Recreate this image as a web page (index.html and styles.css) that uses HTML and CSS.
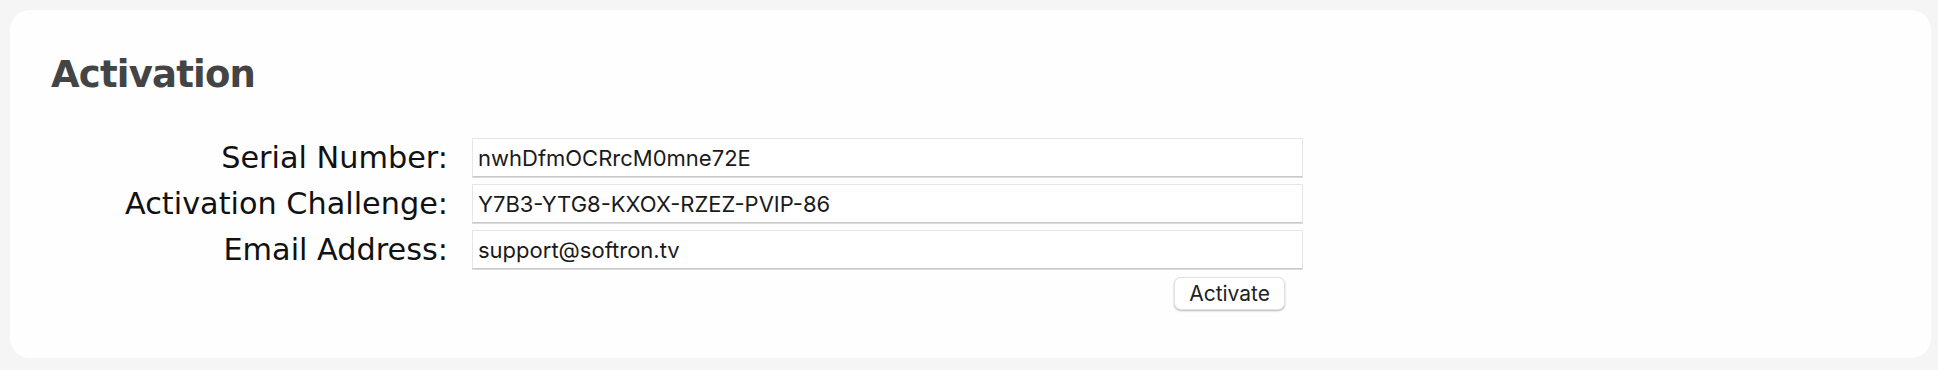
FILE: index.html
```html
<!DOCTYPE html>
<html lang="en">
<head>
<meta charset="utf-8">
<title>Activation</title>
<link rel="stylesheet" href="styles.css">
</head>
<body>
<section class="card">
  <h1 class="title">Activation</h1>
  <form class="form">
    <label class="label" for="serial">Serial Number:</label>
    <input class="field" id="serial" type="text" value="nwhDfmOCRrcM0mne72E">
    <label class="label" for="challenge">Activation Challenge:</label>
    <input class="field" id="challenge" type="text" value="Y7B3-YTG8-KXOX-RZEZ-PVIP-86">
    <label class="label" for="email">Email Address:</label>
    <input class="field" id="email" type="text" value="support@softron.tv">
    <div class="actions">
      <button class="btn" type="button">Activate</button>
    </div>
  </form>
</section>
</body>
</html>
```

FILE: styles.css
```css
html, body {
  background: #f5f5f5;
}
body {
  margin: 10px 7px 12px 10px;
}
.card {
  background: #fefefe;
  border-radius: 20px;
  padding: 44px 41px 47px 41px;
  box-sizing: border-box;
  height: 348px;
}
.title {
  margin: 0;
  font-family: "DejaVu Sans", sans-serif;
  font-weight: bold;
  font-size: 37px;
  letter-spacing: -0.8px;
  color: #444444;
  line-height: 42px;
}
.form {
  margin: 42px 0 0 0;
  display: grid;
  grid-template-columns: 397px 831px;
  column-gap: 24px;
  row-gap: 7px;
  align-items: center;
}
.label {
  font-family: "DejaVu Sans", sans-serif;
  font-size: 30.3px;
  color: #111111;
  text-align: right;
  line-height: 34px;
}
.field {
  box-sizing: border-box;
  height: 39px;
  margin: 0;
  padding: 0 5px;
  border: 1px solid #e6e6e6;
  border-bottom: 1px solid #c8c8c8;
  box-shadow: 0 1px 0 #dcdcdc;
  background: #ffffff;
  font-family: "Inter", "Liberation Sans", sans-serif;
  font-size: 22px;
  color: #1a1a1a;
  outline: none;
}
.actions {
  grid-column: 2;
  display: flex;
  justify-content: flex-end;
  padding-right: 18px;
  padding-top: 1px;
}
.btn {
  box-sizing: border-box;
  height: 33px;
  padding: 0 14px;
  margin: 0;
  background: #ffffff;
  border: 1px solid #e2e2e2;
  border-radius: 7px;
  box-shadow: 0 1px 2px rgba(0, 0, 0, 0.28);
  font-family: "Inter", "Liberation Sans", sans-serif;
  font-size: 21px;
  color: #222222;
}
```
